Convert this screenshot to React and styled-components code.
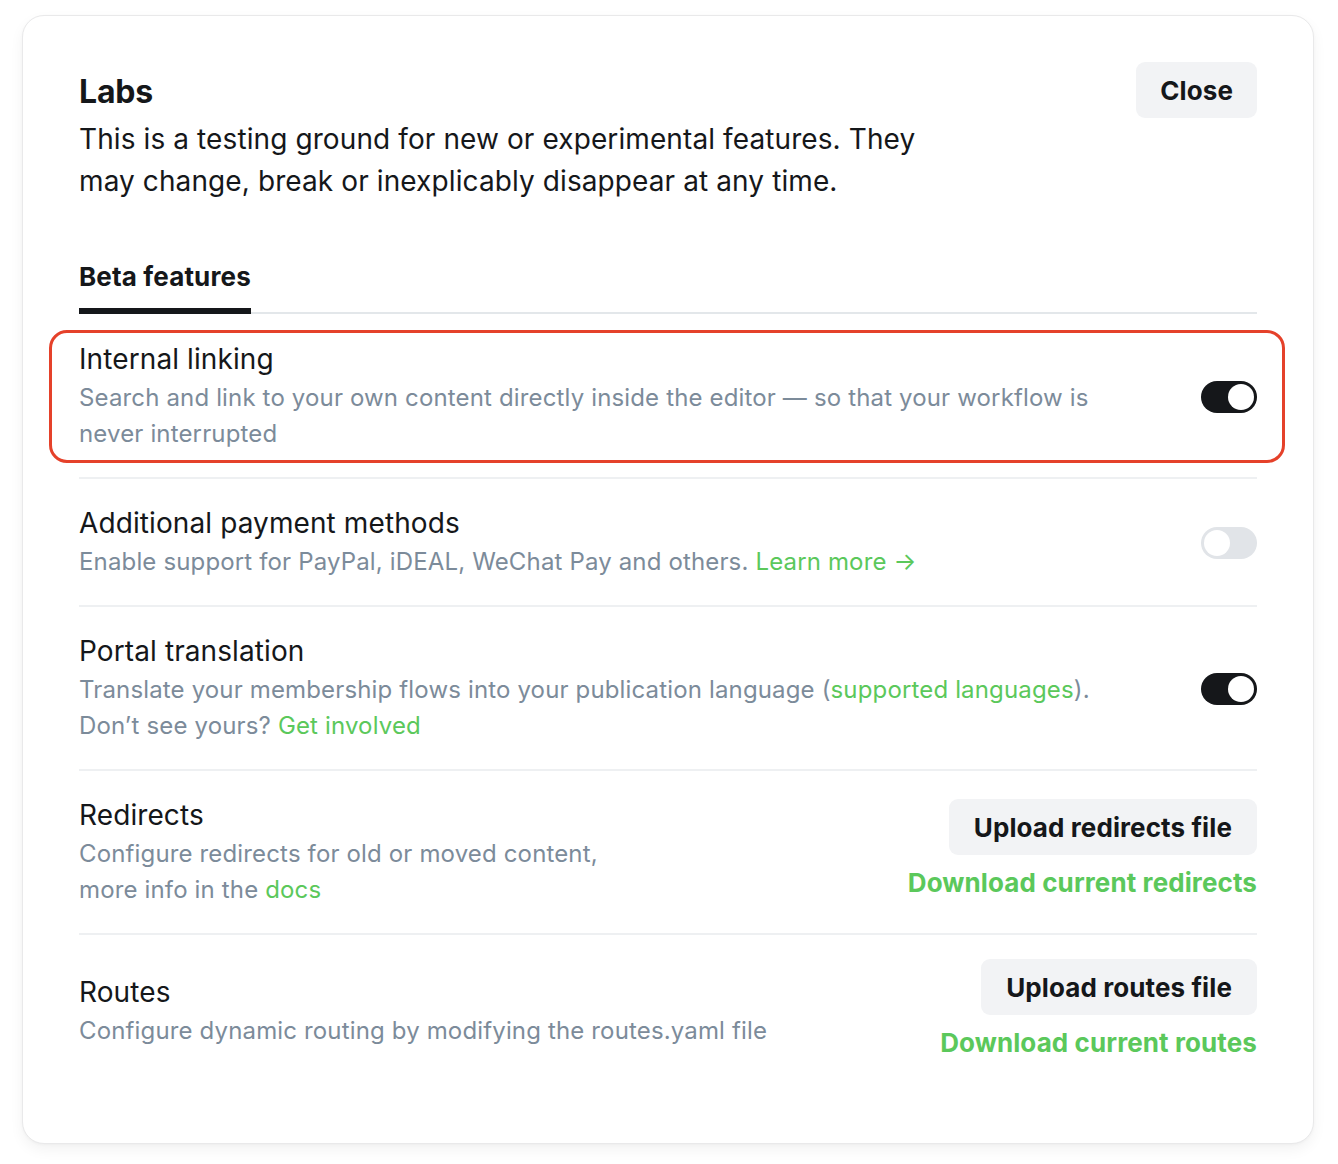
import React from "react";
import styled, { createGlobalStyle } from "styled-components";

const Global = createGlobalStyle`
  html, body { margin: 0; padding: 0; background: #ffffff; }
  body { font-family: Inter, "Noto Sans", sans-serif; color: #15171a; -webkit-font-smoothing: antialiased; }
  * { box-sizing: border-box; }
`;

const Page = styled.div`
  padding: 15px 24px 20px 22px;
`;

const Card = styled.div`
  background: #fff;
  border: 1px solid #e9e9ea;
  border-radius: 22px;
  box-shadow: 0 6px 14px rgba(0, 0, 0, 0.05), 0 1px 3px rgba(0, 0, 0, 0.03);
  padding: 46px 56px 60px 56px;
  min-height: 1128px;
`;

const Header = styled.div`
  display: flex;
  justify-content: space-between;
  align-items: flex-start;
`;

const HeaderText = styled.div`
  max-width: 870px;
  padding-top: 10px;
`;

const Title = styled.h1`
  margin: 0;
  font-size: 32px;
  line-height: 40px;
  font-weight: 700;
  letter-spacing: -0.2px;
  color: #15171a;
`;

const Intro = styled.p`
  margin: 6px 0 0;
  font-size: 28px;
  line-height: 42px;
  font-weight: 400;
  color: #15171a;
  letter-spacing: 0.1px;
`;

const GreyButton = styled.button`
  font-family: inherit;
  border: none;
  background: #f2f3f5;
  color: #15171a;
  border-radius: 9px;
  height: 56px;
  padding: 0 ${(p) => p.$px || 25}px;
  font-size: 26px;
  font-weight: 700;
  letter-spacing: 0.1px;
  cursor: pointer;
  white-space: nowrap;
`;

const Tabs = styled.div`
  margin-top: 60px;
  display: flex;
  border-bottom: 2px solid #e3e7ea;
`;

const Tab = styled.div`
  position: relative;
  font-size: 26px;
  line-height: 30px;
  font-weight: 700;
  letter-spacing: 0.15px;
  padding-bottom: 20px;
  color: #15171a;
  &::after {
    content: "";
    position: absolute;
    left: 0;
    right: 0;
    bottom: -2px;
    height: 6px;
    background: #15171a;
  }
`;

const Row = styled.div`
  position: relative;
  display: flex;
  align-items: center;
  justify-content: space-between;
  gap: 40px;
  padding: ${(p) => p.$pt || 26}px 0 25px;
  border-bottom: ${(p) => (p.$last ? "none" : "2px solid #eef0f2")};
`;

const Highlight = styled.div`
  position: absolute;
  left: -30px;
  right: -28px;
  top: 16px;
  bottom: 14px;
  border: 3px solid #e5412a;
  border-radius: 18px;
  pointer-events: none;
`;

const RowText = styled.div`
  display: flex;
  flex-direction: column;
  gap: 3px;
`;

const RowTitle = styled.div`
  font-size: 28px;
  line-height: 36px;
  font-weight: 400;
  color: #15171a;
  letter-spacing: 0.1px;
`;

const RowDesc = styled.div`
  font-size: 24px;
  line-height: 36px;
  color: #7c8b9a;
  letter-spacing: 0.15px;
  max-width: ${(p) => p.$max || 1050}px;
`;

const Link = styled.a`
  color: #5bc85b;
  text-decoration: none;
  font-weight: ${(p) => (p.$bold ? 700 : 400)};
  font-size: ${(p) => (p.$bold ? "26px" : "inherit")};
  line-height: ${(p) => (p.$bold ? "30px" : "inherit")};
  letter-spacing: ${(p) => (p.$bold ? "0.1px" : "inherit")};
`;

const Toggle = styled.div`
  flex: none;
  width: 56px;
  height: 32px;
  border-radius: 16px;
  background: ${(p) => (p.$on ? "#15171a" : "#e1e4e8")};
  position: relative;
  &::after {
    content: "";
    position: absolute;
    top: 3px;
    left: ${(p) => (p.$on ? "27px" : "3px")};
    width: 26px;
    height: 26px;
    border-radius: 50%;
    background: #fff;
  }
`;

const Actions = styled.div`
  flex: none;
  display: flex;
  flex-direction: column;
  align-items: flex-end;
  gap: 13px;
  white-space: nowrap;
  margin-top: ${(p) => p.$lift || 0}px;
`;

export default function App() {
  return (
    <>
      <Global />
      <Page>
        <Card>
          <Header>
            <HeaderText>
              <Title>Labs</Title>
              <Intro>
                This is a testing ground for new or experimental features. They
                may change, break or inexplicably disappear at any time.
              </Intro>
            </HeaderText>
            <GreyButton $px={24}>Close</GreyButton>
          </Header>

          <Tabs>
            <Tab>Beta features</Tab>
          </Tabs>

          <Row $pt={27}>
            <Highlight />
            <RowText>
              <RowTitle>Internal linking</RowTitle>
              <RowDesc>
                Search and link to your own content directly inside the editor — so
                that your workflow is never interrupted
              </RowDesc>
            </RowText>
            <Toggle $on />
          </Row>

          <Row>
            <RowText>
              <RowTitle>Additional payment methods</RowTitle>
              <RowDesc>
                Enable support for PayPal, iDEAL, WeChat Pay and others.{" "}
                <Link href="#">Learn more →</Link>
              </RowDesc>
            </RowText>
            <Toggle />
          </Row>

          <Row>
            <RowText>
              <RowTitle>Portal translation</RowTitle>
              <RowDesc>
                Translate your membership flows into your publication language (
                <Link href="#">supported languages</Link>). Don’t see yours?{" "}
                <Link href="#">Get involved</Link>
              </RowDesc>
            </RowText>
            <Toggle $on />
          </Row>

          <Row>
            <RowText>
              <RowTitle>Redirects</RowTitle>
              <RowDesc $max={560}>
                Configure redirects for old or moved content, more info in the{" "}
                <Link href="#">docs</Link>
              </RowDesc>
            </RowText>
            <Actions $lift={-8}>
              <GreyButton>Upload redirects file</GreyButton>
              <Link href="#" $bold>
                Download current redirects
              </Link>
            </Actions>
          </Row>

          <Row $last $pt={30}>
            <RowText>
              <RowTitle>Routes</RowTitle>
              <RowDesc>Configure dynamic routing by modifying the routes.yaml file</RowDesc>
            </RowText>
            <Actions $lift={-6}>
              <GreyButton>Upload routes file</GreyButton>
              <Link href="#" $bold>
                Download current routes
              </Link>
            </Actions>
          </Row>
        </Card>
      </Page>
    </>
  );
}
